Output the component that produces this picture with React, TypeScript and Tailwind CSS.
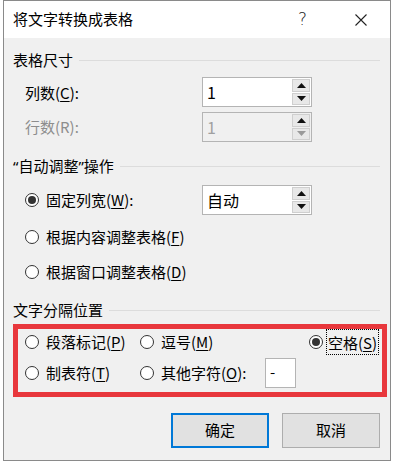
import React from 'react'

const font = { fontFamily: '"Noto Sans CJK SC", "Noto Sans", sans-serif' }
const latin = { fontFamily: '"Noto Sans", sans-serif' }

const Radio = ({ checked = false }: { checked?: boolean }) => (
	<span className="flex items-center justify-center w-[14px] h-[14px] rounded-full border border-[#333] bg-white shrink-0">
		{checked && <span className="w-[8px] h-[8px] rounded-full bg-[#333]" />}
	</span>
)

const Arrow = ({ up, gray }: { up?: boolean; gray?: boolean }) => (
	<svg width="9" height="5" viewBox="0 0 9 5">
		<polygon points={up ? '0,5 9,5 4.5,0' : '0,0 9,0 4.5,5'} fill={gray ? '#9a9a9a' : '#111'} />
	</svg>
)

const SpinBox = ({ value, disabled }: { value: string; disabled?: boolean }) => (
	<div
		className={`flex w-[110px] h-[30px] border border-[#b4b4b4] ${disabled ? 'bg-[#f0f0f0]' : 'bg-white'}`}
	>
		<span
			className={`flex-1 pl-[4px] text-[16px] leading-[28px] ${disabled ? 'text-[#a0a0a0]' : 'text-black'}`}
		>
			{value}
		</span>
		<div className="flex flex-col w-[19px] py-[1px] pr-[1px] gap-[1px]">
			<div className="flex-1 flex items-center justify-center bg-[#e8e8e8] border border-[#cfcfcf]">
				<Arrow up />
			</div>
			<div className="flex-1 flex items-center justify-center bg-[#e8e8e8] border border-[#cfcfcf]">
				<Arrow gray={disabled} />
			</div>
		</div>
	</div>
)

const Heading = ({ children }: { children: React.ReactNode }) => (
	<div className="flex items-center h-[20px] gap-[6px] mr-[10px]">
		<span className="text-[15px] leading-[20px] text-black whitespace-nowrap">{children}</span>
		<span className="flex-1 h-px bg-[#dcdcdc]" />
	</div>
)

const Label = ({ text, k, after = ')' }: { text: string; k: string; after?: string }) => (
	<span className="text-[15px] leading-[20px] text-black whitespace-nowrap">
		{text}(<span className="underline underline-offset-2">{k}</span>
		{after}
	</span>
)

export default function App() {
	return (
		<div className="w-[396px] h-[466px] bg-white pl-[3px]" style={font}>
			<div className="flex flex-col w-[388px] h-[461px] border border-[#8a8a8a]">
				<header className="flex items-center h-[37px] bg-white pl-[9px]">
					<span className="text-[15px] text-black">将文字转换成表格</span>
					<span className="ml-auto text-[17px] text-[#222] font-light" style={{ fontFamily: '"DejaVu Sans", sans-serif' }}>
						?
					</span>
					<svg className="ml-[48px] mr-[23px]" width="12" height="12" viewBox="0 0 12 12">
						<path d="M0.5 0.5 L11.5 11.5 M11.5 0.5 L0.5 11.5" stroke="#222" strokeWidth="1.1" />
					</svg>
				</header>

				<main className="flex flex-col flex-1 bg-[#f0f0f0] pl-[9px]">
					<section className="mt-[12px]">
						<Heading>表格尺寸</Heading>
						<div className="flex items-center mt-[7px] pl-[12px]">
							<span className="w-[177px]">
								<Label text="列数" k="C" after="):" />
							</span>
							<SpinBox value="1" />
						</div>
						<div className="flex items-center mt-[5px] pl-[12px]">
							<span className="w-[177px] text-[15px] leading-[20px] text-[#8d8d8d]">行数(R):</span>
							<SpinBox value="1" disabled />
						</div>
					</section>

					<section className="mt-[14px]">
						<Heading>
							<span style={latin}>“</span>自动调整<span style={latin}>”</span>操作
						</Heading>
						<div className="flex items-center mt-[9px] pl-[12px]">
							<span className="flex items-center gap-[7px] w-[177px]">
								<Radio checked />
								<Label text="固定列宽" k="W" after="):" />
							</span>
							<SpinBox value="自动" />
						</div>
						<div className="flex items-center gap-[7px] h-[24px] mt-[10px] pl-[12px]">
							<Radio />
							<Label text="根据内容调整表格" k="F" />
						</div>
						<div className="flex items-center gap-[7px] h-[24px] mt-[11px] pl-[12px]">
							<Radio />
							<Label text="根据窗口调整表格" k="D" />
						</div>
					</section>

					<section className="mt-[16px]">
						<Heading>文字分隔位置</Heading>
						<div className="mt-[4px] mr-[3px] h-[73px] border-[5px] border-[#e8373c] pl-[7px] pr-[4px] pt-[3px]">
							<div className="flex items-center h-[20px]">
								<span className="flex items-center gap-[7px] w-[115px]">
									<Radio />
									<Label text="段落标记" k="P" />
								</span>
								<span className="flex items-center gap-[7px]">
									<Radio />
									<Label text="逗号" k="M" />
								</span>
								<span className="flex items-center gap-[4px] ml-auto">
									<Radio checked />
									<span className="outline outline-1 outline-dotted outline-black px-[1px]">
										<Label text="空格" k="S" />
									</span>
								</span>
							</div>
							<div className="flex items-center h-[30px] mt-[6px]">
								<span className="flex items-center gap-[7px] w-[115px]">
									<Radio />
									<Label text="制表符" k="T" />
								</span>
								<span className="flex items-center gap-[7px] w-[125px]">
									<Radio />
									<Label text="其他字符" k="O" after="):" />
								</span>
								<span className="w-[31px] h-[30px] bg-white border border-[#b4b4b4] pl-[4px] text-[15px] leading-[26px] text-black">
									-
								</span>
							</div>
						</div>
					</section>

					<footer className="flex justify-end gap-[13px] mt-[16px] mr-[10px]">
						<button className="w-[98px] h-[35px] bg-[#e1e1e1] border-2 border-[#0078d7] text-[15px] text-black">
							确定
						</button>
						<button className="w-[98px] h-[35px] bg-[#e1e1e1] border border-[#adadad] text-[15px] text-black">
							取消
						</button>
					</footer>
				</main>
			</div>
		</div>
	)
}
